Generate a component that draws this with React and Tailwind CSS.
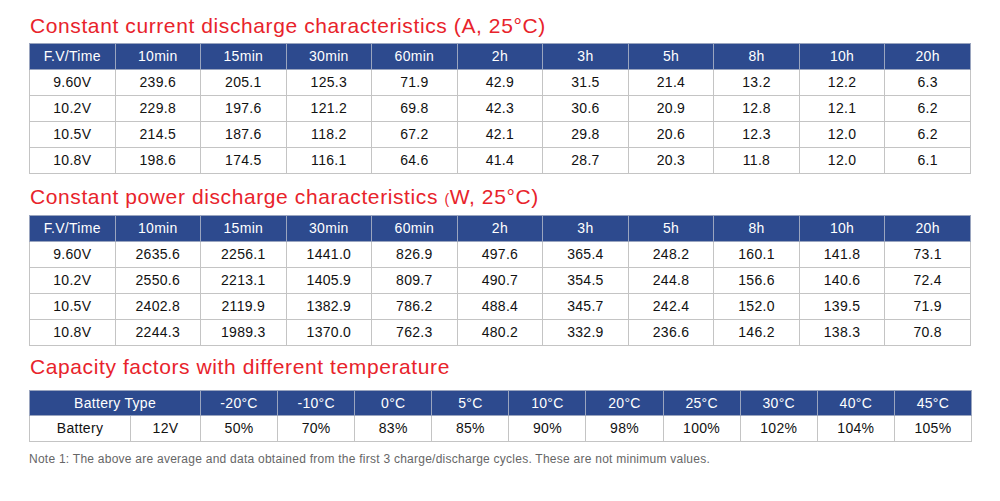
import React from "react";

const cols1 = ["F.V/Time", "10min", "15min", "30min", "60min", "2h", "3h", "5h", "8h", "10h", "20h"];
const current = [
  ["9.60V", "239.6", "205.1", "125.3", "71.9", "42.9", "31.5", "21.4", "13.2", "12.2", "6.3"],
  ["10.2V", "229.8", "197.6", "121.2", "69.8", "42.3", "30.6", "20.9", "12.8", "12.1", "6.2"],
  ["10.5V", "214.5", "187.6", "118.2", "67.2", "42.1", "29.8", "20.6", "12.3", "12.0", "6.2"],
  ["10.8V", "198.6", "174.5", "116.1", "64.6", "41.4", "28.7", "20.3", "11.8", "12.0", "6.1"],
];
const power = [
  ["9.60V", "2635.6", "2256.1", "1441.0", "826.9", "497.6", "365.4", "248.2", "160.1", "141.8", "73.1"],
  ["10.2V", "2550.6", "2213.1", "1405.9", "809.7", "490.7", "354.5", "244.8", "156.6", "140.6", "72.4"],
  ["10.5V", "2402.8", "2119.9", "1382.9", "786.2", "488.4", "345.7", "242.4", "152.0", "139.5", "71.9"],
  ["10.8V", "2244.3", "1989.3", "1370.0", "762.3", "480.2", "332.9", "236.6", "146.2", "138.3", "70.8"],
];
const temps = ["-20°C", "-10°C", "0°C", "5°C", "10°C", "20°C", "25°C", "30°C", "40°C", "45°C"];
const factors = ["50%", "70%", "83%", "85%", "90%", "98%", "100%", "102%", "104%", "105%"];

function DataTable({ rows }) {
  return (
    <table className="w-[942px] table-fixed border-collapse text-[14px] tracking-[0.3px] text-[#111]">
      <tbody>
        <tr className="h-[26px] bg-[#2d4a8e] text-white">
          {cols1.map((c) => (
            <td key={c} className="border border-[#9aa5bf] p-0 text-center">{c}</td>
          ))}
        </tr>
        {rows.map((r) => (
          <tr key={r[0]} className="h-[26px] bg-white">
            {r.map((v, i) => (
              <td key={i} className="border border-[#c4c4c4] p-0 text-center">{v}</td>
            ))}
          </tr>
        ))}
      </tbody>
    </table>
  );
}

export default function App() {
  return (
    <div className="w-[1000px] h-[501px] bg-white pl-[29px] font-['Liberation_Sans',Arial,sans-serif]">
      <div className="h-[13px]" />
      <h2 className="text-[21px] leading-[26px] text-[#e8232b] tracking-[0.6px] pl-px">
        Constant current discharge characteristics (A, 25°C)
      </h2>
      <div className="h-[4px]" />
      <DataTable rows={current} />
      <div className="h-[10px]" />
      <h2 className="text-[21px] leading-[26px] text-[#e8232b] tracking-[0.6px] pl-px">
        Constant power discharge characteristics <span className="text-[14px]">(</span>W, 25°C)
      </h2>
      <div className="h-[3px]" />
      <DataTable rows={power} />
      <div className="h-[8px]" />
      <h2 className="text-[21px] leading-[26px] text-[#e8232b] tracking-[0.6px] pl-px">
        Capacity factors with different temperature
      </h2>
      <div className="h-[10px]" />
      <table className="w-[942px] table-fixed border-collapse text-[14px] tracking-[0.3px] text-[#111]">
        <colgroup>
          <col className="w-[101px]" />
          <col className="w-[70px]" />
          {temps.map((t) => (
            <col key={t} className="w-[77.1px]" />
          ))}
        </colgroup>
        <tbody>
          <tr className="h-[25px] bg-[#2d4a8e] text-white">
            <td colSpan={2} className="border border-[#9aa5bf] p-0 text-center">Battery Type</td>
            {temps.map((t) => (
              <td key={t} className="border border-[#9aa5bf] p-0 text-center">{t}</td>
            ))}
          </tr>
          <tr className="h-[26px] bg-white">
            <td className="border border-[#c4c4c4] p-0 text-center">Battery</td>
            <td className="border border-[#c4c4c4] p-0 text-center">12V</td>
            {factors.map((f, i) => (
              <td key={i} className="border border-[#c4c4c4] p-0 text-center">{f}</td>
            ))}
          </tr>
        </tbody>
      </table>
      <p className="mt-[10px] text-[12px] leading-[15px] tracking-[0.25px] text-[#666]">
        Note 1: The above are average and data obtained from the first 3 charge/discharge cycles. These are not minimum values.
      </p>
    </div>
  );
}
